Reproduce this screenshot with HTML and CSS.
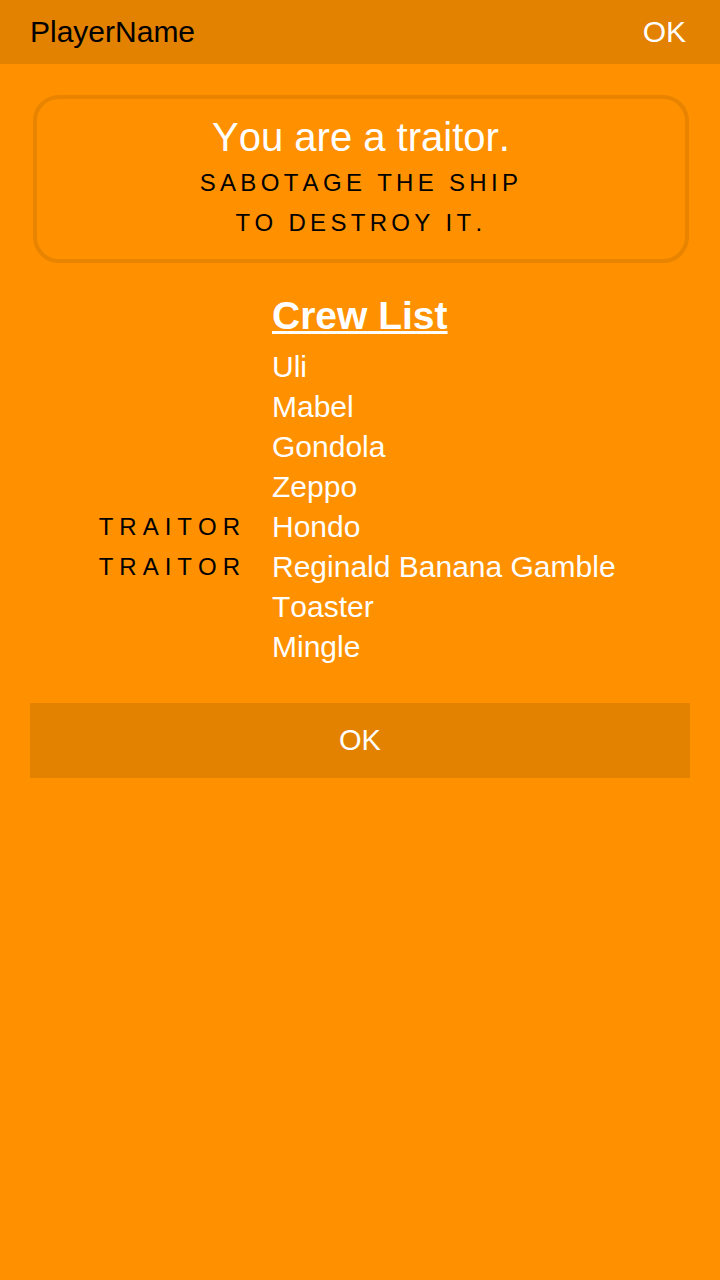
FILE: index.html
```html
<!DOCTYPE html>
<html>
<head>
<meta charset="utf-8">
<link rel="stylesheet" href="styles.css">
</head>
<body>
<header class="topbar">
  <span class="player">PlayerName</span>
  <span class="top-ok">OK</span>
</header>
<main class="content">
  <section class="role-card">
    <div class="role-title">You are a traitor.</div>
    <div class="role-goal">SABOTAGE THE SHIP<br>TO DESTROY IT.</div>
  </section>
  <section class="crew">
    <div class="tag"></div>
    <div class="crew-heading">Crew List</div>
    <div class="tag"></div><div class="name">Uli</div>
    <div class="tag"></div><div class="name">Mabel</div>
    <div class="tag"></div><div class="name">Gondola</div>
    <div class="tag"></div><div class="name">Zeppo</div>
    <div class="tag">TRAITOR</div><div class="name">Hondo</div>
    <div class="tag">TRAITOR</div><div class="name">Reginald Banana Gamble</div>
    <div class="tag"></div><div class="name">Toaster</div>
    <div class="tag"></div><div class="name">Mingle</div>
  </section>
  <div class="button-wrap">
    <button class="ok-button">OK</button>
  </div>
</main>
</body>
</html>
```
FILE: styles.css
```css
html, body {
  margin: 0;
  padding: 0;
}
body {
  background: #ff9000;
  font-family: "Liberation Sans", Arial, sans-serif;
  font-kerning: none;
  width: 720px;
  height: 1280px;
  overflow: hidden;
}
.topbar {
  height: 64px;
  background: #e38100;
  display: flex;
  align-items: center;
  justify-content: space-between;
  padding: 0 34px 0 30px;
  font-size: 30px;
}
.player {
  color: #000;
}
.top-ok {
  color: #fff;
}
.content {
  display: flex;
  flex-direction: column;
}
.role-card {
  margin: 31px 31px 0 33px;
  border: 4px solid #e88400;
  border-radius: 26px;
  padding: 12px 0 16px;
  text-align: center;
}
.role-title {
  color: #fff;
  font-size: 40px;
  line-height: 52px;
}
.role-goal {
  color: #000;
  font-size: 24px;
  line-height: 40px;
  letter-spacing: 4.3px;
}
.crew {
  margin-top: 22px;
  display: grid;
  grid-template-columns: 246px 1fr;
  column-gap: 26px;
}
.crew-heading {
  color: #fff;
  font-size: 39px;
  font-weight: bold;
  line-height: 62px;
  text-decoration: underline;
  text-decoration-thickness: 3px;
}
.tag {
  text-align: right;
  color: #000;
  font-size: 24px;
  letter-spacing: 6px;
  line-height: 40px;
}
.name {
  color: #fff;
  font-size: 30px;
  line-height: 40px;
}
.button-wrap {
  padding: 36px 30px 0;
}
.ok-button {
  display: block;
  width: 100%;
  height: 75px;
  border: none;
  background: #e38100;
  color: #fff;
  font-family: "Liberation Sans", Arial, sans-serif;
  font-size: 29px;
  padding: 0;
}
```
